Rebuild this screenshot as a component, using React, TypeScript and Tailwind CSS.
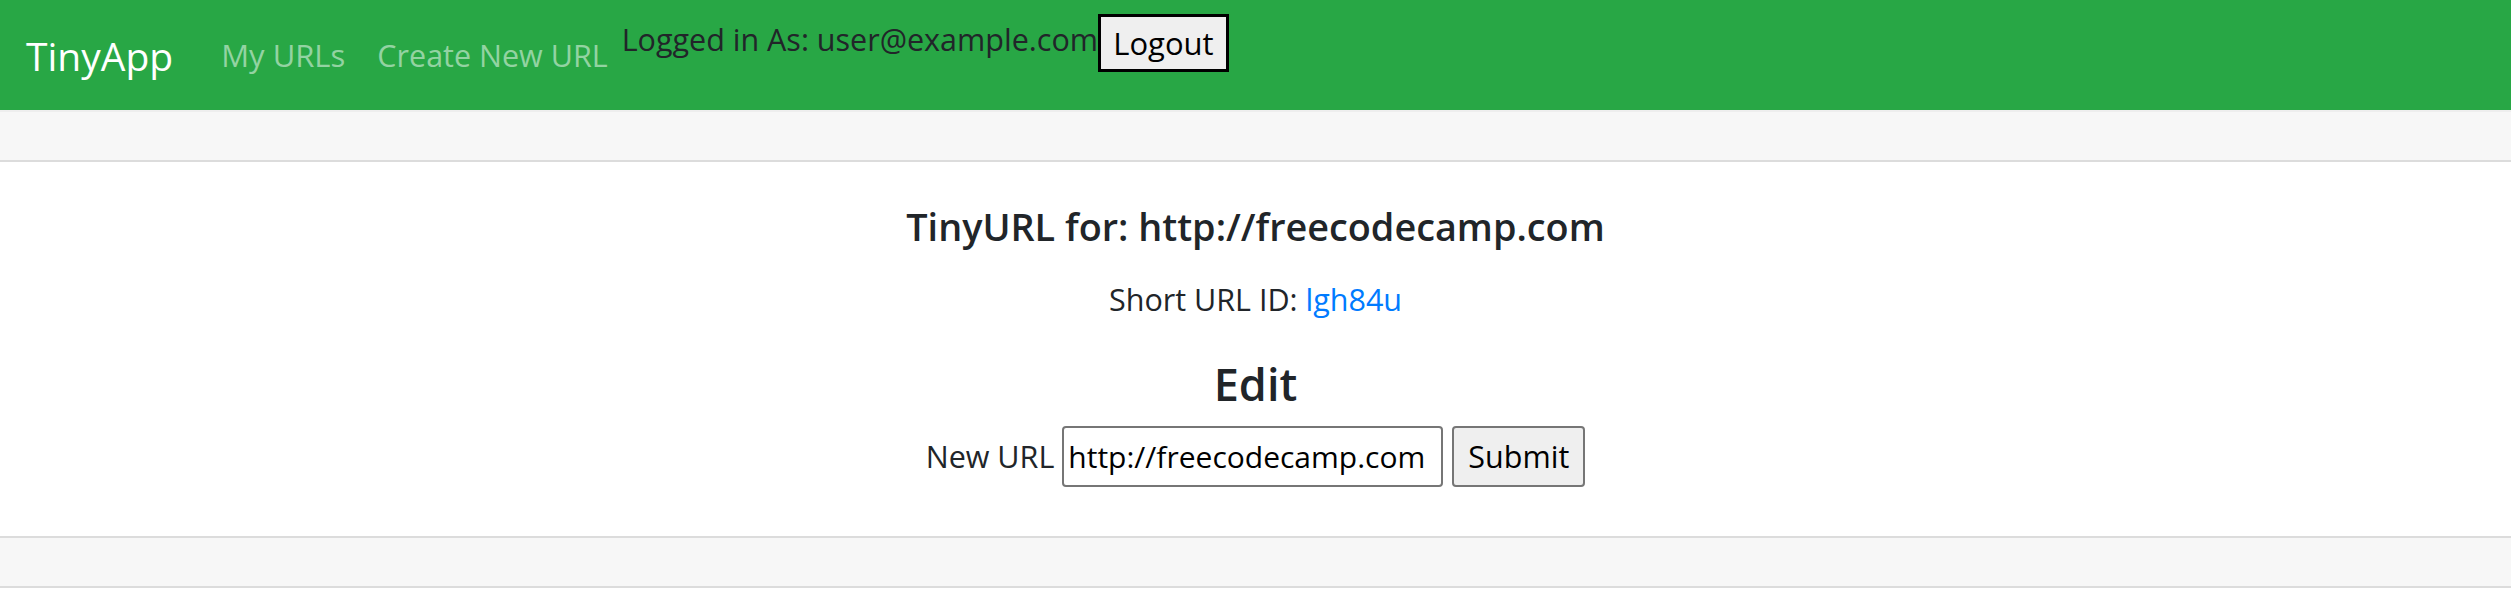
import React from "react";

export default function App() {
  const font = { fontFamily: '"Segoe UI", "Open Sans", "Noto Sans", sans-serif' };
  return (
    <div className="w-[2511px] h-[601px] bg-white text-[#212529]" style={font}>
      <nav className="h-[110px] bg-[#28a745] flex items-start pl-[26px]">
        <div className="flex items-center h-full">
          <span className="text-white text-[39px] leading-none">TinyApp</span>
          <a className="ml-[48px] text-[31px] leading-none text-[#93d3a2]">My URLs</a>
          <a className="ml-[32px] text-[30.5px] leading-none text-[#93d3a2]">Create New URL</a>
        </div>
        <div className="flex items-start mt-[14px] ml-[14px]">
          <span className="text-[30.5px] leading-[38px] text-[#212529] mt-[6px]">Logged in As: user@example.com</span>
          <button className="h-[58px] w-[131px] bg-[#efefef] border-[3px] border-black text-[31px] leading-none text-black" style={font}>Logout</button>
        </div>
      </nav>
      <div className="border-y-2 border-[#dcdcdc] border-t-[#eeeeee]">
        <div className="h-[50px] bg-[#f7f7f7] border-b-2 border-[#dcdcdc]" />
        <div className="flex flex-col items-center pt-[41px] pb-[40px]">
          <h5 className="text-[37.8px] font-semibold leading-[48px]">TinyURL for: http://freecodecamp.com</h5>
          <p className="mt-[24px] text-[30.5px] leading-[48px]">
            Short URL ID: <a className="text-[#007bff]">lgh84u</a>
          </p>
          <h3 className="mt-[33px] text-[45px] font-semibold leading-[56px]">Edit</h3>
          <form className="flex items-center mt-[14px] text-[30.5px]">
            <label className="mr-[8px]">New URL</label>
            <input
              className="w-[381px] h-[61px] border-2 border-[#767676] rounded-[4px] px-[4px] text-[30px] text-black"
              defaultValue="http://freecodecamp.com"
              style={font}
            />
            <button className="ml-[9px] w-[133px] h-[61px] border-2 border-[#767676] rounded-[4px] bg-[#efefef] text-[30.5px] text-black" style={font}>Submit</button>
          </form>
        </div>
        <div className="h-[50px] bg-[#f7f7f7] border-t-2 border-[#dcdcdc] mt-[9px]" />
      </div>
    </div>
  );
}
